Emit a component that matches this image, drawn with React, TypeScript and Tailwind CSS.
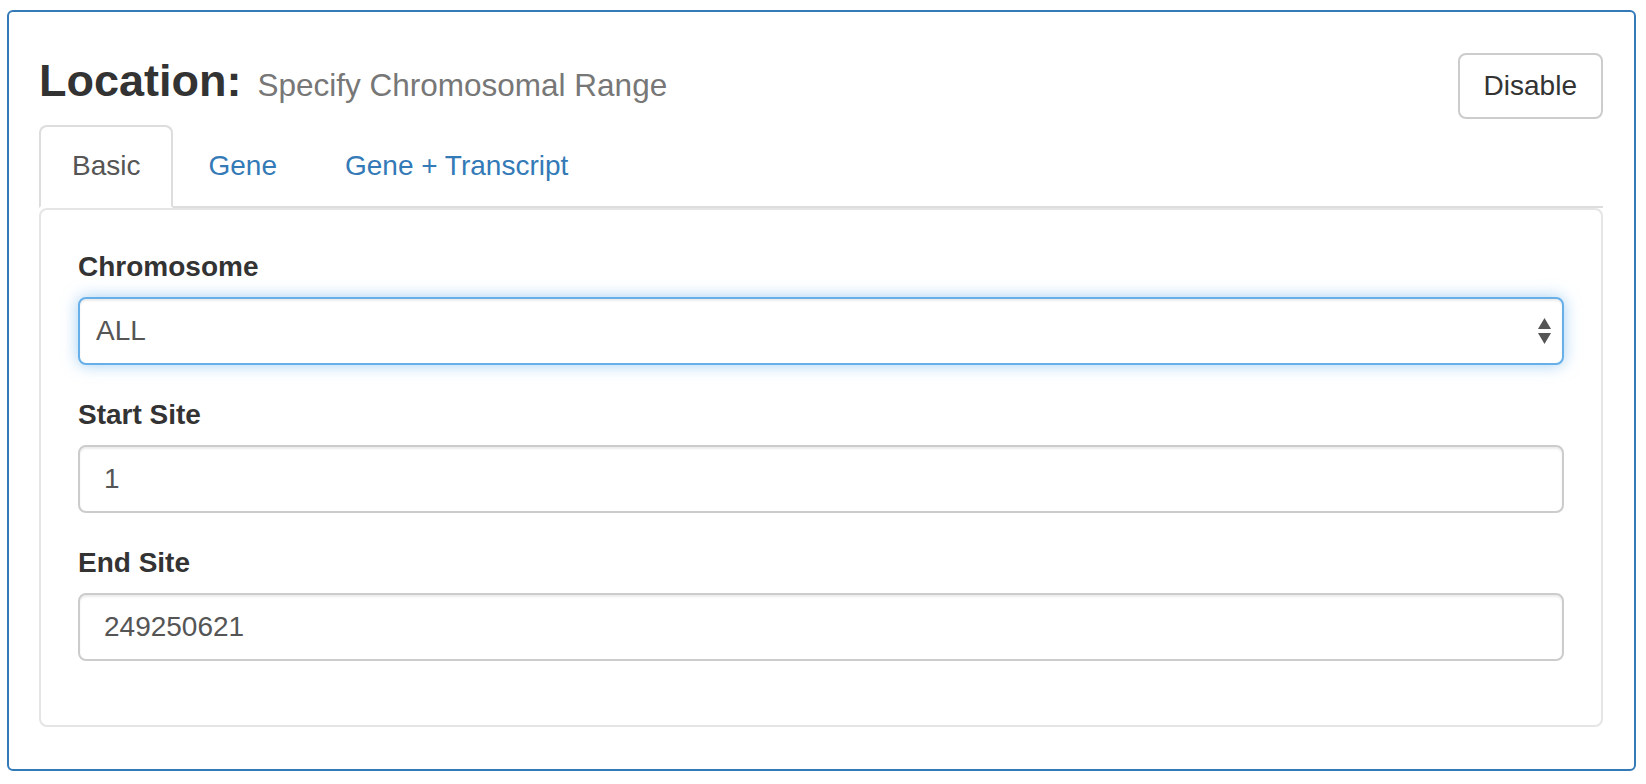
const Field = ({ label, children }: { label: string; children: React.ReactNode }) => {
  return (
    <div className="flex flex-col">
      <label className="mb-[10px] text-[28px] font-bold leading-[40px] text-[#333]">{label}</label>
      {children}
    </div>
  );
};

const inputCls =
  "block h-[68px] w-full rounded-[8px] border-2 border-[#ccc] bg-white px-[24px] text-[28px] text-[#555] shadow-[inset_0_2px_2px_rgba(0,0,0,0.075)] outline-none";

const App = () => {
  return (
    <div className="min-h-screen bg-white pl-[7px] pt-[10px] font-['Liberation_Sans',Arial,sans-serif]">
      <div className="w-[1629px] rounded-[6px] border-2 border-[#337ab7] pl-[30px] pr-[31px] pt-[41px] pb-[42px]">
        {/* header */}
        <div className="flex h-[66px] items-start justify-between">
          <h3 className="mt-[3px] text-[45px] font-bold leading-[1.1] text-[#333]">
            Location:
            <small className="ml-[16px] text-[31.5px] font-normal text-[#777]">Specify Chromosomal Range</small>
          </h3>
          <button className="h-[66px] rounded-[8px] border-2 border-[#ccc] bg-white px-[24px] text-[28px] leading-[40px] text-[#333]">
            Disable
          </button>
        </div>

        {/* tabs */}
        <ul className="mt-[6px] flex border-b-2 border-[#ddd]">
          <li className="-mb-[2px] mr-[2px]">
            <a className="block rounded-t-[8px] border-2 border-[#ddd] border-b-transparent bg-white px-[31px] pt-[19px] pb-[20px] text-[28px] leading-[40px] text-[#555]">
              Basic
            </a>
          </li>
          <li className="-mb-[2px] mr-[2px]">
            <a className="block rounded-t-[8px] border-2 border-transparent px-[31px] pt-[19px] pb-[20px] text-[28px] leading-[40px] text-[#337ab7]">
              Gene
            </a>
          </li>
          <li className="-mb-[2px] mr-[2px]">
            <a className="block rounded-t-[8px] border-2 border-transparent px-[31px] pt-[19px] pb-[20px] text-[28px] leading-[40px] text-[#337ab7]">
              Gene + Transcript
            </a>
          </li>
        </ul>

        {/* tab content */}
        <div className="flex flex-col gap-[30px] rounded-[8px] border-2 border-[#e5e5e5] pl-[37px] pr-[37px] pt-[37px] pb-[64px]">
          <Field label="Chromosome">
            <div className="relative">
              <select
                defaultValue="ALL"
                className="block h-[68px] w-full appearance-none rounded-[8px] border-2 border-[#66afe9] bg-white pl-[16px] pr-[40px] text-[28px] text-[#555] shadow-[inset_0_2px_2px_rgba(0,0,0,0.075),0_0_16px_rgba(102,175,233,0.6)] outline-none"
              >
                <option value="ALL">ALL</option>
              </select>
              <svg
                className="pointer-events-none absolute right-[13px] top-1/2 -translate-y-1/2"
                width="13"
                height="26"
                viewBox="0 0 13 26"
              >
                <polygon points="6.5,0 13,11 0,11" fill="#555" />
                <polygon points="0,15 13,15 6.5,26" fill="#555" />
              </svg>
            </div>
          </Field>
          <Field label="Start Site">
            <input className={inputCls} defaultValue="1" />
          </Field>
          <Field label="End Site">
            <input className={inputCls} defaultValue="249250621" />
          </Field>
        </div>
      </div>
    </div>
  );
};

export default App;
